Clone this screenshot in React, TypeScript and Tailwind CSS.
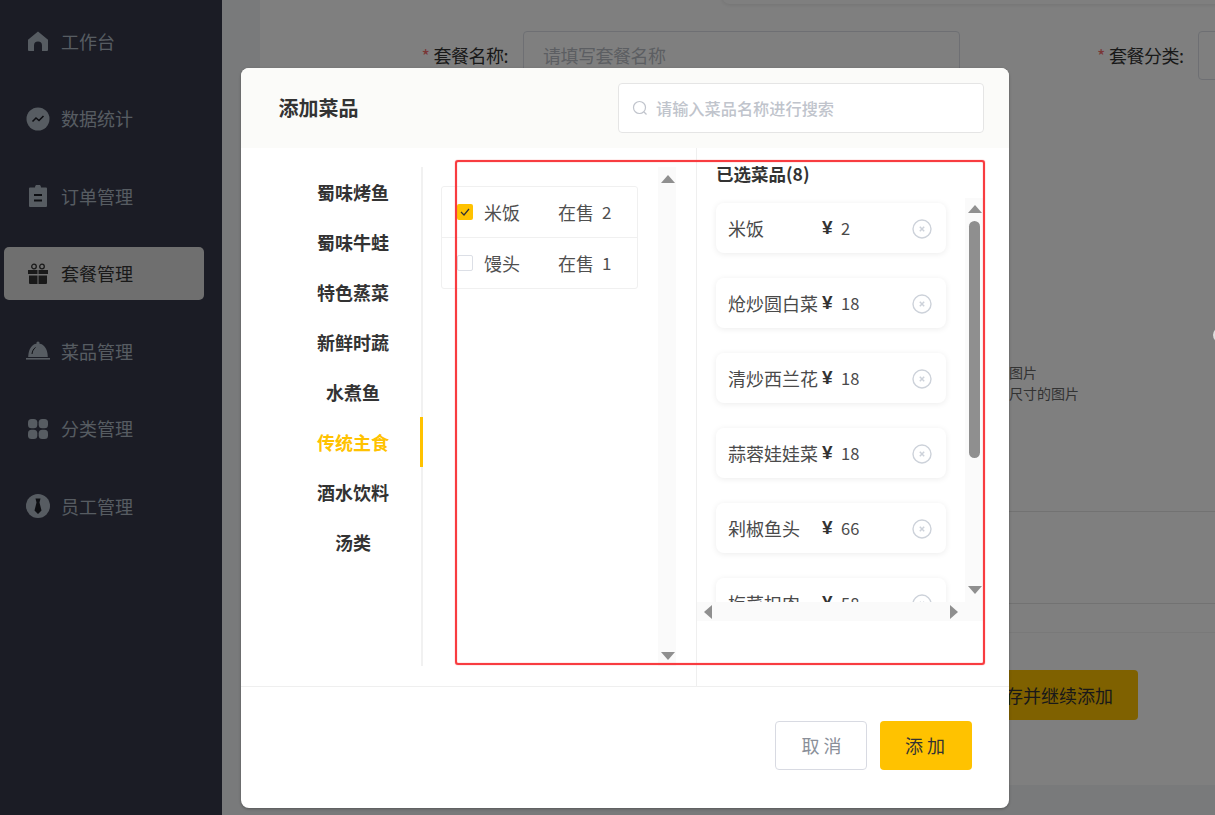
import React from "react";

type Dish = { name: string; price: number };

const categories = ["蜀味烤鱼", "蜀味牛蛙", "特色蒸菜", "新鲜时蔬", "水煮鱼", "传统主食", "酒水饮料", "汤类"];

const selected: Dish[] = [
  { name: "米饭", price: 2 },
  { name: "炝炒圆白菜", price: 18 },
  { name: "清炒西兰花", price: 18 },
  { name: "蒜蓉娃娃菜", price: 18 },
  { name: "剁椒鱼头", price: 66 },
  { name: "梅菜扣肉", price: 58 },
];

const HomeIcon = () => (
  <svg viewBox="0 0 22 22" className="w-[22px] h-[22px]" fill="currentColor">
    <path d="M11 1.500 21 9.800V20a1 1 0 0 1-1 1h-5v-5.500a4 4 0 0 0-8 0V21H2a1 1 0 0 1-1-1V9.800Z" />
  </svg>
);
const ChartIcon = () => (
  <svg viewBox="0 0 24 24" className="w-6 h-6">
    <circle cx="12" cy="12" r="11.500" fill="currentColor" />
    <path d="M6.500 14.500 10 11l3 2.500 4.500-4.500" fill="none" stroke="#1b1c25" strokeWidth="1.600" />
  </svg>
);
const OrderIcon = () => (
  <svg viewBox="0 0 22 22" className="w-[22px] h-[22px]">
    <path fill="currentColor" d="M8 2.500a3 3 0 0 1 6 0h5a1 1 0 0 1 1 1V21a1 1 0 0 1-1 1H3a1 1 0 0 1-1-1V3.500a1 1 0 0 1 1-1Z" />
    <path d="M7 10h8M7 15.500h8" stroke="#1b1c25" strokeWidth="1.800" />
  </svg>
);
const GiftIcon = () => (
  <svg viewBox="0 0 22 22" className="w-[22px] h-[22px]" fill="currentColor">
    <path d="M1 7h9.500v4H1ZM11.500 7H21v4h-9.500ZM2 12.500h8.500V21H3a1 1 0 0 1-1-1ZM11.500 12.500H20V20a1 1 0 0 1-1 1h-7.500Z" />
    <circle cx="7" cy="3.500" r="2.300" fill="none" stroke="currentColor" strokeWidth="1.300" />
    <circle cx="15" cy="3.500" r="2.300" fill="none" stroke="currentColor" strokeWidth="1.300" />
  </svg>
);
const DishIcon = () => (
  <svg viewBox="0 0 24 20" className="w-6 h-5" fill="currentColor">
    <circle cx="12" cy="2" r="1.600" />
    <path d="M12 2.500c5.500 0 9.500 4.500 9.800 13.500H2.200C2.500 7 6.500 2.500 12 2.500Z" />
    <rect x="0" y="17" width="24" height="1.600" />
    <path d="M6 13c.3-3 1.500-5 3.500-6.500" fill="none" stroke="#1b1c25" strokeWidth="1" />
  </svg>
);
const GridIcon = () => (
  <svg viewBox="0 0 20 20" className="w-5 h-5" fill="currentColor">
    <rect x="0" y="0" width="9.300" height="9.300" rx="3.500" />
    <rect x="10.700" y="0" width="9.300" height="9.300" rx="3.500" />
    <rect x="0" y="10.700" width="9.300" height="9.300" rx="3.500" />
    <rect x="10.700" y="10.700" width="9.300" height="9.300" rx="3.500" />
  </svg>
);
const StaffIcon = () => (
  <svg viewBox="0 0 24 24" className="w-6 h-6">
    <circle cx="12" cy="12" r="12" fill="currentColor" />
    <path fill="#1b1c25" d="M9.500 4.500h5L13.500 8.500l2 8L12 20l-3.500-3.500 2-8Z" />
  </svg>
);

const menu = [
  { label: "工作台", icon: <HomeIcon /> },
  { label: "数据统计", icon: <ChartIcon /> },
  { label: "订单管理", icon: <OrderIcon /> },
  { label: "套餐管理", icon: <GiftIcon />, active: true },
  { label: "菜品管理", icon: <DishIcon /> },
  { label: "分类管理", icon: <GridIcon /> },
  { label: "员工管理", icon: <StaffIcon /> },
];

const Arrow = ({ dir }: { dir: "up" | "down" | "left" | "right" }) => {
  const points = {
    up: "0,8 7,0 14,8",
    down: "0,0 14,0 7,8",
    left: "8,0 8,14 0,7",
    right: "0,0 0,14 8,7",
  }[dir];
  const box = dir === "up" || dir === "down" ? "w-[14px] h-2" : "w-2 h-[14px]";
  const viewBox = dir === "up" || dir === "down" ? "0 0 14 8" : "0 0 8 14";
  return (
    <svg viewBox={viewBox} className={box} fill="#8f8f8f">
      <polygon points={points} />
    </svg>
  );
};

const CloseCircle = () => (
  <svg viewBox="0 0 20 20" className="w-5 h-5 mt-[1px]" fill="none" stroke="#cdd2da">
    <circle cx="10" cy="10" r="9" strokeWidth="1.400" />
    <path d="M7.800 7.800l4.400 4.400M12.200 7.800l-4.400 4.400" strokeWidth="1.500" />
  </svg>
);

function Sidebar() {
  return (
    <aside className="w-[222px] shrink-0 h-full bg-[#36384a] pt-[14.500px] pl-1 flex flex-col gap-[24.500px]">
      {menu.map((m) => (
        <div
          key={m.label}
          className={`w-[200px] h-[53px] rounded-[5px] pl-[22px] flex items-center gap-[11px] text-[18px] ${
            m.active ? "bg-[#dedede] text-[#333333]" : "text-[#aeb8c4]"
          }`}
        >
          <span className="w-[24px] flex justify-center">{m.icon}</span>
          <span>{m.label}</span>
        </div>
      ))}
    </aside>
  );
}

function Background() {
  return (
    <main className="flex-1 min-w-0 h-full bg-[#f3f4f7] pl-[38px]">
      <div className="w-[1000px] h-[785px] bg-white pt-[31px] text-[18px] text-[#333333]">
        <div className="flex items-start">
          <span className="w-[248px] shrink-0 h-[49px] flex items-center justify-end tracking-[-0.500px]">
            <span className="text-[#f56c6c] mr-1">*</span>套餐名称:
          </span>
          <div className="ml-[15px] w-[437px] shrink-0 h-[49px] border border-[#dcdfe6] rounded-[4px] pl-[19px] flex items-center text-[#b8bcc4] tracking-[-0.500px]">
            请填写套餐名称
          </div>
          <span className="ml-[137px] shrink-0 h-[49px] flex items-center tracking-[-0.500px] whitespace-nowrap">
            <span className="text-[#f56c6c] mr-1">*</span>套餐分类:
          </span>
          <div className="ml-[15px] w-[100px] h-[49px] shrink-0 border border-[#dcdfe6] rounded-[4px]" />
        </div>
        <div className="ml-[749px] mt-[282px] text-[14px] leading-[21px] text-[#666666]">
          <p>图片</p>
          <p>尺寸的图片</p>
        </div>
        <div className="mt-[107px] border-t border-[#e4e4e4]" />
        <div className="mt-[91px] border-t border-[#e4e4e4]" />
        <div className="mt-[28px] border-t border-[#f3f3f3]" />
        <div className="ml-[702px] mt-[37px] w-[176px] h-[50px] bg-[#ffc200] rounded-[4px] flex items-center justify-center">
          保存并继续添加
        </div>
      </div>
    </main>
  );
}

function Row({ name, price, checked }: { name: string; price: number; checked?: boolean }) {
  return (
    <div className="h-[50px] pl-[15px] flex items-center">
      <span
        className={`w-4 h-4 rounded-[2px] mr-[11px] flex items-center justify-center ${
          checked ? "bg-[#ffc200]" : "bg-white border border-[#dcdfe6]"
        }`}
      >
        {checked && (
          <svg viewBox="0 0 16 16" className="w-4 h-4" fill="none" stroke="#333333" strokeWidth="1.200">
            <path d="M4 8l3 3 5-6" />
          </svg>
        )}
      </span>
      <span className="w-[74px]">{name}</span>
      <span className="w-[44px]">在售</span>
      <span className="text-[17px]">{price}</span>
    </div>
  );
}

function Modal() {
  return (
    <div className="absolute left-[241px] top-[68px] w-[768px] h-[740px] bg-white rounded-[8px] shadow-[0_1px_3px_rgba(0,0,0,0.3)] overflow-hidden text-[#333333]">
      <header className="h-[80px] bg-[#fbfbf9] pl-[37.500px] pr-[25px] flex items-center justify-between">
        <h2 className="text-[20px] font-semibold">添加菜品</h2>
        <div className="w-[366px] h-[50px] bg-white border border-[#e5e5e5] rounded-[4px] pl-[13px] flex items-center gap-[8px] text-[16.200px] font-medium text-[#c0c4cc]">
          <svg viewBox="0 0 16 16" className="w-4 h-4" fill="none" stroke="#c0c4cc" strokeWidth="1.200">
            <circle cx="7.500" cy="7.500" r="6" />
            <path d="M12 12l2.500 2.500" />
          </svg>
          <span>请输入菜品名称进行搜索</span>
        </div>
      </header>

      <div className="h-[539px] flex border-b border-[#efefef]">
        {/* 分类 */}
        <nav className="w-[182px] h-[499px] mt-[19px] border-r-2 border-[#f1f1f1] shrink-0">
          {categories.map((c) => (
            <div
              key={c}
              className={`relative h-[50px] flex items-center justify-center pl-[44px] text-[18px] font-bold ${
                c === "传统主食" ? "text-[#ffc200]" : "text-[#333333]"
              }`}
            >
              {c}
              {c === "传统主食" && <span className="absolute right-[-2px] top-0 w-[3px] h-[50px] bg-[#ffc200]" />}
            </div>
          ))}
        </nav>

        {/* 菜品 */}
        <div className="w-[274px] shrink-0 flex border-r border-[#efefef]">
          <div className="w-[235px] shrink-0 pl-[18px] pt-[38px]">
            <div className="w-[197px] border border-[#f0f0f0] rounded-[3px] text-[18px] text-[#4f4f4f]">
              <Row name="米饭" price={2} checked />
              <div className="border-t border-[#f0f0f0]" />
              <Row name="馒头" price={1} />
            </div>
          </div>
          <div className="w-[18px] h-[499px] mt-[19px] shrink-0 bg-[#fafafa] flex flex-col items-center justify-between pt-[8px] pb-[6px] pl-[1px]">
            <Arrow dir="up" />
            <Arrow dir="down" />
          </div>
        </div>

        {/* 已选 */}
        <div className="w-[286px] shrink-0">
          <h3 className="pl-[19px] pt-[13px] h-[50px] text-[17.500px] font-bold text-[#333333]">已选菜品(8)</h3>
          <div className="h-[404px] flex overflow-hidden">
            <div className="w-[268px] shrink-0 pl-[19px] pt-[5px] flex flex-col gap-[25px] overflow-hidden">
              {selected.map((d) => (
                <div
                  key={d.name}
                  className="w-[230px] h-[50px] shrink-0 rounded-[8px] bg-white shadow-[0_1px_6px_rgba(0,0,0,0.08)] pl-[12px] flex items-center text-[18px] text-[#4a4a4a]"
                >
                  <span className="w-[94px] whitespace-nowrap">{d.name}</span>
                  <span className="w-[19px] text-[#333333] text-[19px] font-semibold font-['Liberation_Sans',sans-serif]">¥</span>
                  <span className="w-[71px] text-[16.500px]">{d.price}</span>
                  <CloseCircle />
                </div>
              ))}
            </div>
            <div className="relative w-[18px] shrink-0 bg-[#fafafa] flex flex-col items-center justify-between pt-[7px] pb-[8px] pl-[1px]">
              <Arrow dir="up" />
              <span className="absolute left-[4px] top-[23px] w-[11px] h-[237px] rounded-full bg-[#8f8f8f]" />
              <Arrow dir="down" />
            </div>
          </div>
          <div className="h-[19px] bg-[#fafafa] flex items-center justify-between pl-[7px] pr-[25px]">
            <Arrow dir="left" />
            <Arrow dir="right" />
          </div>
        </div>
      </div>

      <footer className="h-[120px] flex justify-end items-start gap-[13px] pt-[34px] pr-[37px] text-[18px]">
        <button className="w-[92px] h-[49px] border border-[#d8dae2] rounded-[4px] bg-white text-[#8a8f99] tracking-[4px] pl-[5px]">取消</button>
        <button className="w-[92px] h-[49px] rounded-[4px] bg-[#ffc200] text-[#333333] tracking-[4px] pl-[2px]">添加</button>
      </footer>
    </div>
  );
}

export default function App() {
  return (
    <div className="relative w-[1215px] h-[815px] overflow-hidden flex font-['Noto_Sans_CJK_SC',sans-serif]">
      <Sidebar />
      <Background />
      {/* 顶部浮层 */}
      <div className="absolute left-[722px] top-[-40px] w-[600px] h-[44px] bg-white rounded-[8px] shadow-[0_1px_4px_rgba(0,0,0,0.1)]" />
      <div className="absolute inset-0 bg-black/50" />
      <div className="absolute left-[1213px] top-[327px] w-4 h-4 rounded-full bg-[#dddddd]" />
      <Modal />
      {/* 标注框 */}
      <div className="absolute left-[455px] top-[160px] w-[530px] h-[505px] border-2 border-[#f83c40] rounded-[3px] shadow-[0_0_1px_#f83c40,inset_0_0_1px_#f83c40]" />
    </div>
  );
}
